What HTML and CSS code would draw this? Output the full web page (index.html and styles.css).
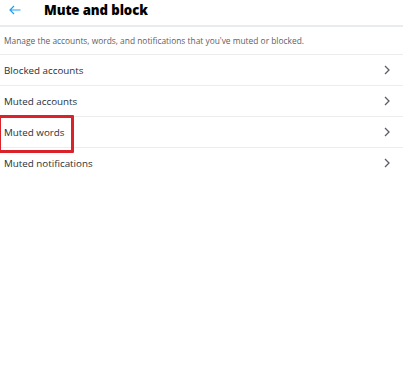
FILE: index.html
```html
<!DOCTYPE html>
<html lang="en">
<head>
    <meta charset="UTF-8">
    <title>Mute and block</title>
    <link rel="stylesheet" href="styles.css">
</head>
<body>
    <div class="page">
        <div class="header">
            <svg class="back" width="12" height="10" viewBox="0 0 12 10">
                <path d="M11.5 5H1.2M5 1L1 5l4 4" fill="none" stroke="#1da1f2" stroke-width="1.2"/>
            </svg>
            <div class="title">Mute and block</div>
        </div>

        <div class="desc">Manage the accounts, words, and notifications that you've muted or blocked.</div>

        <div class="list">
            <div class="row">
                <span class="label">Blocked accounts</span>
                <svg class="chev" width="6" height="10" viewBox="0 0 6 10"><path d="M1 1l4 4-4 4" fill="none" stroke="#5a5f66" stroke-width="1.3"/></svg>
            </div>
            <div class="row">
                <span class="label">Muted accounts</span>
                <svg class="chev" width="6" height="10" viewBox="0 0 6 10"><path d="M1 1l4 4-4 4" fill="none" stroke="#5a5f66" stroke-width="1.3"/></svg>
            </div>
            <div class="row">
                <span class="label">Muted words</span>
                <svg class="chev" width="6" height="10" viewBox="0 0 6 10"><path d="M1 1l4 4-4 4" fill="none" stroke="#5a5f66" stroke-width="1.3"/></svg>
                <span class="highlight"></span>
            </div>
            <div class="row last">
                <span class="label">Muted notifications</span>
                <svg class="chev" width="6" height="10" viewBox="0 0 6 10"><path d="M1 1l4 4-4 4" fill="none" stroke="#5a5f66" stroke-width="1.3"/></svg>
            </div>
        </div>
    </div>
</body>
</html>
```

FILE: styles.css
```css
/* base */
body {
    margin: 0;
    background: #fff;
    font-family: 'Open Sans', 'Noto Sans', sans-serif;
    color: #14171a;
}

.page {
    display: flex;
    flex-direction: column;
}

/* header */
.header {
    height: 25px;
    display: flex;
    align-items: center;
    padding-left: 9px;
    border-bottom: 2px solid #e9ecee;
}

.back {
    margin-right: 23px;
    margin-top: -6px;
}

.title {
    font-size: 13.2px;
    font-weight: 800;
    color: #000;
    margin-top: -6px;
    letter-spacing: -0.1px;
}

/* description */
.desc {
    height: 27px;
    display: flex;
    align-items: center;
    padding-left: 4px;
    font-size: 8.4px;
    color: #5b6167;
    border-bottom: 1px solid #ececec;
}

/* rows */
.row {
    height: 30px;
    display: flex;
    align-items: center;
    justify-content: space-between;
    padding: 0 13px 0 4px;
    border-bottom: 1px solid #ededed;
    font-size: 9.8px;
    color: #2b2f33;
    position: relative;
}

.row.last {
    border-bottom: none;
}

.highlight {
    position: absolute;
    left: -2px;
    top: -2px;
    width: 70px;
    height: 32px;
    border: 3px solid #d9222a;
    border-radius: 1px;
}
```
